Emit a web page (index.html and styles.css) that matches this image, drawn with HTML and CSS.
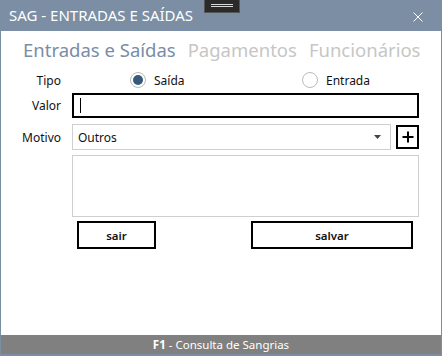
FILE: index.html
```html
<!DOCTYPE html>
<html>
<head>
<meta charset="utf-8">
<link rel="stylesheet" href="styles.css">
</head>
<body>
<div class="window">
  <div class="titlebar">
    <span class="title">SAG - ENTRADAS E SAÍDAS</span>
    <div class="grip"><span></span><span></span></div>
    <svg class="close" width="10" height="10" viewBox="0 0 10 10"><path d="M0.5 0.5L9.5 9.5M9.5 0.5L0.5 9.5" stroke="#fff" stroke-width="1"/></svg>
  </div>
  <div class="content">
    <div class="tabs">
      <span class="tab active">Entradas e Saídas</span>
      <span class="tab">Pagamentos</span>
      <span class="tab">Funcionários</span>
    </div>
    <div class="form">
      <div class="row row-tipo">
        <label class="lbl">Tipo</label>
        <div class="radios">
          <div class="radio"><span class="circle checked"></span><span>Saída</span></div>
          <div class="radio"><span class="circle"></span><span>Entrada</span></div>
        </div>
      </div>
      <div class="row row-valor">
        <label class="lbl">Valor</label>
        <div class="input"><span class="caret"></span></div>
      </div>
      <div class="row row-motivo">
        <label class="lbl">Motivo</label>
        <div class="combo"><span>Outros</span><svg width="7" height="4" viewBox="0 0 7 4"><path d="M0 0H7L3.5 4Z" fill="#444"/></svg></div>
        <div class="plus"><svg width="12" height="12" viewBox="0 0 12 12"><path d="M6 0.5V11.5M0.5 6H11.5" stroke="#000" stroke-width="2"/></svg></div>
      </div>
      <div class="row row-text">
        <div class="lbl"></div>
        <div class="textarea"></div>
      </div>
      <div class="row row-buttons">
        <div class="btn btn-sair">sair</div>
        <div class="btn btn-salvar">salvar</div>
      </div>
    </div>
  </div>
  <div class="statusbar"><b>F1</b> - Consulta de Sangrias</div>
</div>
</body>
</html>
```
FILE: styles.css
```css
* { box-sizing: border-box; }
html, body { margin: 0; padding: 0; }
body {
  width: 442px;
  height: 356px;
  font-family: "Noto Sans", "Open Sans", sans-serif;
  background: #7b8ea4;
}
.window {
  width: 442px;
  height: 356px;
  display: flex;
  flex-direction: column;
  background: #7b8ea4;
  padding: 0 1px 2px 1px;
}
.titlebar {
  height: 31px;
  flex: none;
  display: flex;
  align-items: center;
  position: relative;
  color: #fff;
}
.title {
  font-size: 15px;
  margin-left: 8px;
  margin-top: -2px;
}
.grip {
  position: absolute;
  left: 203px;
  top: 0;
  width: 36px;
  height: 13px;
  background: #2b2a2a;
  border: 1px solid #555;
  border-top: none;
  display: flex;
  flex-direction: column;
  align-items: center;
  padding-top: 4px;
  gap: 1px;
}
.grip span {
  display: block;
  width: 22px;
  height: 1px;
  background: #d8d8d8;
}
.close {
  position: absolute;
  left: 412px;
  top: 12px;
}
.content {
  flex: 1;
  background: #fff;
  display: flex;
  flex-direction: column;
}
.tabs {
  display: flex;
  gap: 12px;
  padding-left: 22px;
  padding-top: 2px;
  font-size: 18.5px;
  height: 34px;
  align-items: center;
}
.tab { color: #c6c6c6; }
.tab.active { color: #7a8da6; }
.form {
  display: flex;
  flex-direction: column;
  font-size: 12px;
  color: #111;
}
.row {
  display: flex;
  align-items: center;
}
.lbl {
  width: 60px;
  text-align: right;
  flex: none;
}
.row-tipo { height: 24px; margin-top: 3px; }
.radios {
  display: flex;
  margin-left: 69px;
}
.radio {
  display: flex;
  align-items: center;
  gap: 8px;
}
.radio:first-child { width: 172px; }
.circle {
  width: 16px;
  height: 16px;
  border: 1px solid #bbb;
  border-radius: 50%;
  display: flex;
  align-items: center;
  justify-content: center;
}
.circle.checked::after {
  content: "";
  width: 10px;
  height: 10px;
  border-radius: 50%;
  background: #36597c;
}
.row-valor { margin-top: 1px; }
.input {
  margin-left: 11px;
  width: 347px;
  height: 25px;
  border: 2px solid #000;
  display: flex;
  align-items: center;
  padding-left: 6px;
}
.caret {
  width: 1px;
  height: 15px;
  background: #000;
}
.row-motivo { margin-top: 6px; }
.combo {
  margin-left: 11px;
  width: 319px;
  height: 26px;
  border: 1px solid #cfcfcf;
  display: flex;
  align-items: center;
  justify-content: space-between;
  padding: 0 9px 0 5px;
}
.plus {
  margin-left: 5px;
  width: 23px;
  height: 24px;
  border: 2px solid #000;
  display: flex;
  align-items: center;
  justify-content: center;
}
.row-text { margin-top: 5px; }
.textarea {
  margin-left: 11px;
  width: 347px;
  height: 62px;
  border: 1px solid #cfcfcf;
}
.row-buttons { margin-top: 4px; }
.btn {
  height: 28px;
  border: 2px solid #000;
  display: flex;
  align-items: center;
  justify-content: center;
  font-weight: 600;
  font-size: 11.5px;
}
.btn-sair { margin-left: 76px; width: 79px; }
.btn-salvar { margin-left: 95px; width: 162px; }
.statusbar {
  flex: none;
  height: 19px;
  background: #808080;
  color: #fff;
  text-align: center;
  font-size: 11.5px;
  line-height: 19px;
}
.statusbar b { font-weight: 700; }
```
